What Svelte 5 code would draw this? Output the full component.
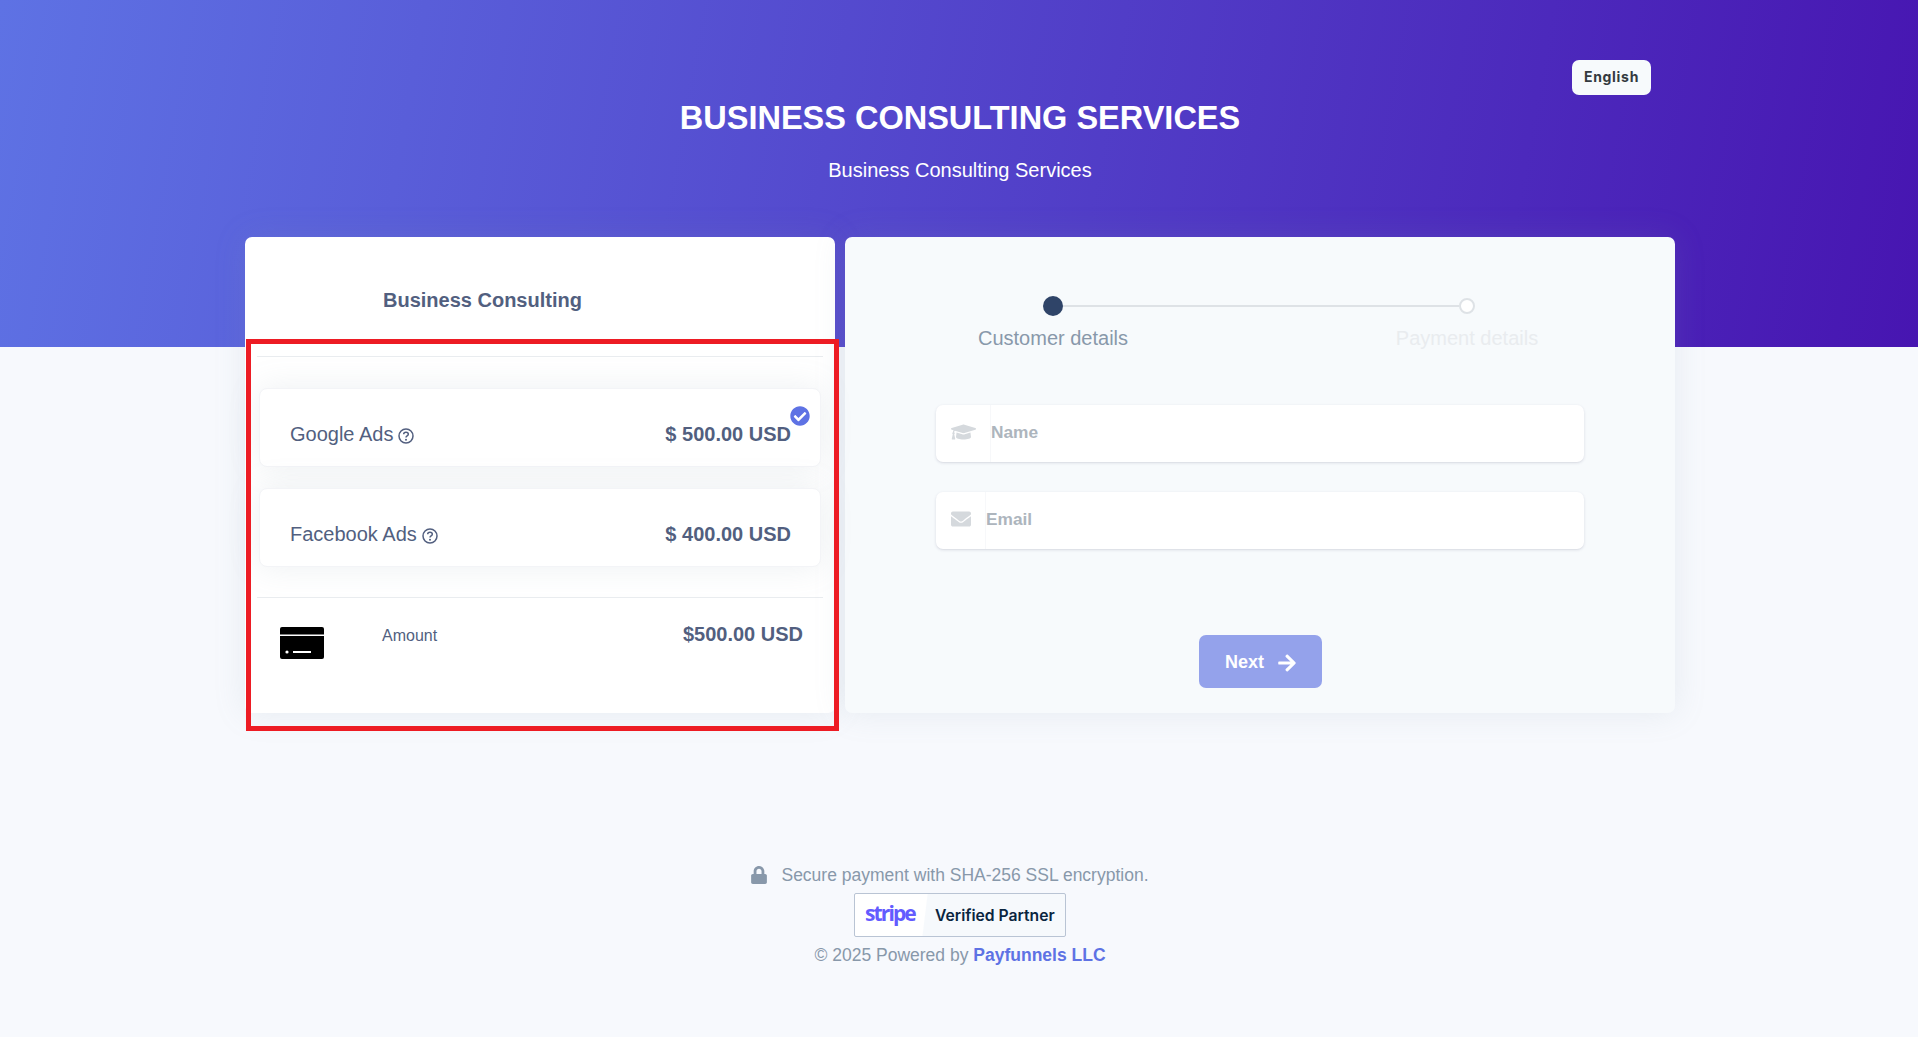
<script>
  let name = "";
  let email = "";

  const services = [
    { title: "Google Ads", price: "$ 500.00 USD", selected: true },
    { title: "Facebook Ads", price: "$ 400.00 USD", selected: false },
  ];
</script>

<div class="page">
  <header class="hero">
    <div class="hero-inner">
      <button class="lang">English</button>
      <h1>BUSINESS CONSULTING SERVICES</h1>
      <p>Business Consulting Services</p>
    </div>
  </header>

  <main class="checkout">
    <section class="summary">
      <div class="summary-head">
        <h2>Business Consulting</h2>
      </div>

      <div class="services">
        {#each services as s}
          <div class="service">
            <span class="service-name">
              {s.title}
              <svg class="help" viewBox="0 0 16 16" width="16" height="16">
                <circle cx="8" cy="8" r="7" fill="none" stroke="#525f7f" stroke-width="1.5" />
                <path d="M5.7 6.3c0-1.3 1.1-2 2.3-2s2.3.7 2.3 1.9c0 1.7-2.3 1.6-2.3 3.2" fill="none" stroke="#525f7f" stroke-width="1.5" />
                <circle cx="8" cy="11.7" r="1" fill="#525f7f" />
              </svg>
            </span>
            <span class="service-price">{s.price}</span>
            {#if s.selected}
              <svg class="tick" viewBox="0 0 512 512" width="20" height="20">
                <circle cx="256" cy="256" r="190" fill="#fff" />
                <path fill="#5e72e4" d="M504 256c0 136.967-111.033 248-248 248S8 392.967 8 256 119.033 8 256 8s248 111.033 248 248zM227.314 387.314l184-184c6.248-6.248 6.248-16.379 0-22.627l-22.627-22.627c-6.248-6.249-16.379-6.249-22.628 0L216 308.118l-70.059-70.059c-6.248-6.248-16.379-6.248-22.628 0l-22.627 22.627c-6.248 6.248-6.248 16.379 0 22.627l104 104c6.249 6.25 16.379 6.25 22.628.001z" />
              </svg>
            {/if}
          </div>
        {/each}
      </div>

      <div class="total">
        <svg class="card-icon" viewBox="0 0 44 32" width="44" height="32">
          <path d="M2 0h40a2 2 0 0 1 2 2v5.5H0V2a2 2 0 0 1 2-2z" />
          <path d="M0 9h44v21a2 2 0 0 1-2 2H2a2 2 0 0 1-2-2z" />
          <circle cx="7" cy="25" r="1.6" fill="#fff" />
          <rect x="13" y="24" width="18" height="2" fill="#fff" />
        </svg>
        <span class="total-label">Amount</span>
        <span class="total-value">$500.00 USD</span>
      </div>
    </section>

    <section class="form-card">
      <div class="steps">
        <div class="step active">
          <span class="dot"></span>
          <span class="step-label">Customer details</span>
        </div>
        <div class="step">
          <span class="dot"></span>
          <span class="step-label">Payment details</span>
        </div>
      </div>

      <div class="field">
        <span class="prepend">
          <svg viewBox="0 0 640 512" width="25" height="20">
            <path fill="#d5d9dd" d="M622.34 153.2L343.4 67.5c-15.2-4.67-31.6-4.67-46.79 0L17.66 153.2c-23.54 7.23-23.54 38.36 0 45.59l48.63 14.94c-10.67 13.19-17.23 29.28-17.88 46.9C38.78 266.15 32 276.11 32 288c0 10.78 5.68 19.85 13.86 25.65L20.33 428.53C18.11 438.52 25.71 448 35.94 448h56.11c10.24 0 17.84-9.48 15.62-19.47L82.14 313.65C90.32 307.85 96 298.78 96 288c0-11.57-6.47-21.25-15.66-26.87.76-15.02 8.44-28.3 20.69-36.72L296.6 284.5c9.06 2.78 26.44 6.25 46.79 0l278.95-85.7c23.55-7.24 23.55-38.36 0-45.6zM352.79 315.09c-28.53 8.76-52.84 3.92-65.59 0l-145.02-44.55L128 384c0 35.35 85.96 64 192 64s192-28.65 192-64l-14.18-113.47-145.03 44.56z" />
          </svg>
        </span>
        <input placeholder="Name" bind:value={name} />
      </div>

      <div class="field">
        <span class="prepend">
          <svg viewBox="0 0 512 512" width="20" height="20">
            <path fill="#d5d9dd" d="M502.3 190.8c3.9-3.1 9.7-.2 9.7 4.7V400c0 26.5-21.5 48-48 48H48c-26.5 0-48-21.5-48-48V195.6c0-5 5.7-7.8 9.7-4.7 22.4 17.4 52.1 39.5 154.1 113.6 21.1 15.4 56.7 47.8 92.2 47.6 35.7.3 72-32.8 92.3-47.6 102-74.1 131.6-96.3 154-113.7zM256 320c23.2.4 56.6-29.2 73.4-41.4 132.7-96.3 142.8-104.7 173.4-128.7 5.8-4.5 9.2-11.5 9.2-18.9v-19c0-26.5-21.5-48-48-48H48C21.5 64 0 85.5 0 112v19c0 7.4 3.4 14.3 9.2 18.9 30.6 23.9 40.7 32.4 173.4 128.7 16.8 12.2 50.2 41.8 73.4 41.4z" />
          </svg>
        </span>
        <input placeholder="Email" bind:value={email} />
      </div>

      <button class="next">
        <span>Next</span>
        <svg viewBox="0 0 448 512" width="18" height="20">
          <path fill="#fff" d="M190.5 66.9l22.2-22.2c9.4-9.4 24.6-9.4 33.9 0L441 239c9.4 9.4 9.4 24.6 0 33.9L246.6 467.3c-9.4 9.4-24.6 9.4-33.9 0l-22.2-22.2c-9.5-9.5-9.3-25 .4-34.3L311.4 296H24c-13.3 0-24-10.7-24-24v-32c0-13.3 10.7-24 24-24h287.4L190.9 101.2c-9.8-9.3-10-24.8-.4-34.3z" />
        </svg>
      </button>
    </section>

    <div class="highlight"></div>
  </main>

  <footer class="foot">
    <div class="secure">
      <svg viewBox="0 0 448 512" width="16" height="18">
        <path fill="#8898aa" d="M400 224h-24v-72C376 68.2 307.8 0 224 0S72 68.2 72 152v72H48c-26.5 0-48 21.5-48 48v192c0 26.5 21.5 48 48 48h352c26.5 0 48-21.5 48-48V272c0-26.5-21.5-48-48-48zm-104 0H152v-72c0-39.7 32.3-72 72-72s72 32.3 72 72v72z" />
      </svg>
      <span>Secure payment with SHA-256 SSL encryption.</span>
    </div>
    <div class="badge">
      <span class="stripe">stripe</span>
      <span class="verified">Verified Partner</span>
    </div>
    <div class="copy">© 2025 Powered by <a href="#top">Payfunnels LLC</a></div>
  </footer>
</div>

<style>
  :global(body) {
    margin: 0;
    background: #f7f9fd;
    font-family: "Liberation Sans", Arial, sans-serif;
  }

  .page {
    min-height: 1037px;
  }

  .hero {
    height: 347px;
    background: linear-gradient(100deg, #5e72e4 0%, #4715b1 100%);
    color: #fff;
    text-align: center;
  }

  .hero-inner {
    position: relative;
    width: 1430px;
    margin: 0 auto;
    padding: 97px 0 0 2px;
  }

  .lang {
    position: absolute;
    top: 60px;
    right: 24px;
    width: 79px;
    height: 35px;
    padding: 0 0 2px;
    border: none;
    border-radius: 7px;
    background: #f7fafc;
    color: #343a40;
    font-family: Inter, sans-serif;
    font-size: 14px;
    font-weight: 700;
    letter-spacing: 0.7px;
  }

  h1 {
    margin: 0;
    font-size: 32.5px;
    line-height: 42px;
    font-weight: 700;
  }

  .hero p {
    margin: 16px 0 0;
    font-size: 20px;
    line-height: 30px;
  }

  .checkout {
    position: relative;
    display: grid;
    grid-template-columns: 590px 830px;
    gap: 10px;
    width: 1430px;
    height: 476px;
    margin: -110px auto 0;
    padding-left: 2px;
  }

  .summary {
    background: #fff;
    border-radius: 7px;
    padding: 0 12px;
    box-shadow: 0 0 32px rgba(136, 152, 170, 0.15);
    color: #525f7f;
  }

  .summary-head {
    height: 120px;
    box-sizing: border-box;
    padding: 50px 0 0 126px;
    border-bottom: 1px solid #e9ecef;
  }

  h2 {
    margin: 0;
    font-size: 20px;
    line-height: 26px;
    font-weight: 700;
  }

  .services {
    display: flex;
    flex-direction: column;
    gap: 21px;
    padding: 31px 2px 30px 2px;
    border-bottom: 1px solid #e9ecef;
  }

  .service {
    position: relative;
    display: flex;
    justify-content: space-between;
    align-items: center;
    height: 79px;
    box-sizing: border-box;
    padding: 14px 29px 0 30px;
    background: #fff;
    border: 1px solid #f3f4f7;
    border-radius: 8px;
    box-shadow: 0 0 32px rgba(136, 152, 170, 0.15);
  }

  .service-name {
    display: flex;
    align-items: center;
    gap: 5px;
    font-size: 20px;
  }

  .help {
    margin-top: 2px;
  }

  .service-price {
    font-size: 20px;
    font-weight: 700;
  }

  .tick {
    position: absolute;
    top: 17px;
    right: 10px;
  }

  .total {
    display: flex;
    align-items: flex-start;
    padding: 29px 20px 0 23px;
  }

  .card-icon {
    display: block;
    flex: none;
  }

  .total-label {
    margin-left: 58px;
    margin-top: -3px;
    font-size: 16px;
    line-height: 24px;
  }

  .total-value {
    margin-left: auto;
    margin-top: -8px;
    font-size: 20px;
    line-height: 30px;
    font-weight: 700;
  }

  .form-card {
    display: flex;
    flex-direction: column;
    box-sizing: border-box;
    padding: 59px 91px 0;
    background: #f7fafc;
    border-radius: 7px;
    box-shadow: 0 0 32px rgba(136, 152, 170, 0.15);
  }

  .steps {
    display: flex;
    justify-content: space-between;
    margin: 0 14px 52px;
  }

  .step {
    position: relative;
    display: flex;
    flex-direction: column;
    align-items: center;
    width: 206px;
    color: #e9ecef;
    font-size: 20px;
  }

  .dot {
    width: 16px;
    height: 16px;
    margin: 2px 0 9px;
    box-sizing: border-box;
    border: 2px solid #dee2e6;
    border-radius: 50%;
    background: #fff;
  }

  .step.active {
    color: #8898aa;
  }

  .step.active .dot {
    width: 20px;
    height: 20px;
    margin: 0 0 7px;
    border: none;
    background: #2f4468;
  }

  .step.active::after {
    content: "";
    position: absolute;
    top: 9px;
    left: 113px;
    width: 396px;
    height: 2px;
    background: #dee2e6;
  }

  .step-label {
    line-height: 30px;
  }

  .field {
    display: flex;
    height: 57px;
    margin-bottom: 30px;
    background: #fff;
    border-radius: 7px;
    box-shadow: 0 1px 3px rgba(50, 50, 93, 0.15), 0 1px 0 rgba(0, 0, 0, 0.02);
  }

  .prepend {
    display: flex;
    align-items: center;
    padding: 0 14px 4px 15px;
    border-right: 1px solid #f7f8fa;
    border-radius: 7px 0 0 7px;
  }

  .field input {
    flex: 1;
    min-width: 0;
    padding: 0 0 2px 0;
    border: none;
    outline: none;
    background: transparent;
    font-family: "Liberation Sans", Arial, sans-serif;
    font-size: 17.3px;
    font-weight: 700;
  }

  .field input::placeholder {
    color: #adb5bd;
    opacity: 1;
  }

  .next {
    display: flex;
    align-items: center;
    justify-content: center;
    gap: 14px;
    width: 123px;
    height: 53px;
    margin: 56px auto 0;
    padding: 2px 0 0 1px;
    border: none;
    border-radius: 7px;
    background: #94a2eb;
    color: #fff;
    font-family: "Liberation Sans", Arial, sans-serif;
    font-size: 18px;
    font-weight: 700;
  }

  .highlight {
    position: absolute;
    left: 3px;
    top: 102px;
    width: 593px;
    height: 392px;
    box-sizing: border-box;
    border: 5.5px solid #ed1c24;
    pointer-events: none;
  }

  .foot {
    display: flex;
    flex-direction: column;
    align-items: center;
    margin-top: 149px;
    padding-left: 2px;
    color: #8898aa;
    font-size: 17.5px;
  }

  .secure {
    display: flex;
    align-items: center;
    gap: 14px;
    height: 26px;
    margin-right: 20px;
  }

  .badge {
    display: flex;
    align-items: center;
    width: 212px;
    height: 44px;
    box-sizing: border-box;
    margin-top: 5px;
    border: 1px solid #b9c4d4;
    border-radius: 2px;
    background: linear-gradient(97deg, #fff 33.5%, #f6f9fc 34%);
  }

  .stripe {
    flex: none;
    width: 80px;
    padding: 0 0 4px 10px;
    box-sizing: border-box;
    color: #635bff;
    font-family: "Open Sans", sans-serif;
    font-size: 21px;
    font-weight: 700;
    letter-spacing: -1.9px;
  }

  .verified {
    color: #0a2540;
    font-family: Inter, sans-serif;
    font-size: 15.7px;
    font-weight: 600;
    white-space: nowrap;
  }

  .copy {
    margin-top: 5px;
    line-height: 26px;
  }

  .copy a {
    color: #5e72e4;
    font-weight: 700;
    text-decoration: none;
  }
</style>
